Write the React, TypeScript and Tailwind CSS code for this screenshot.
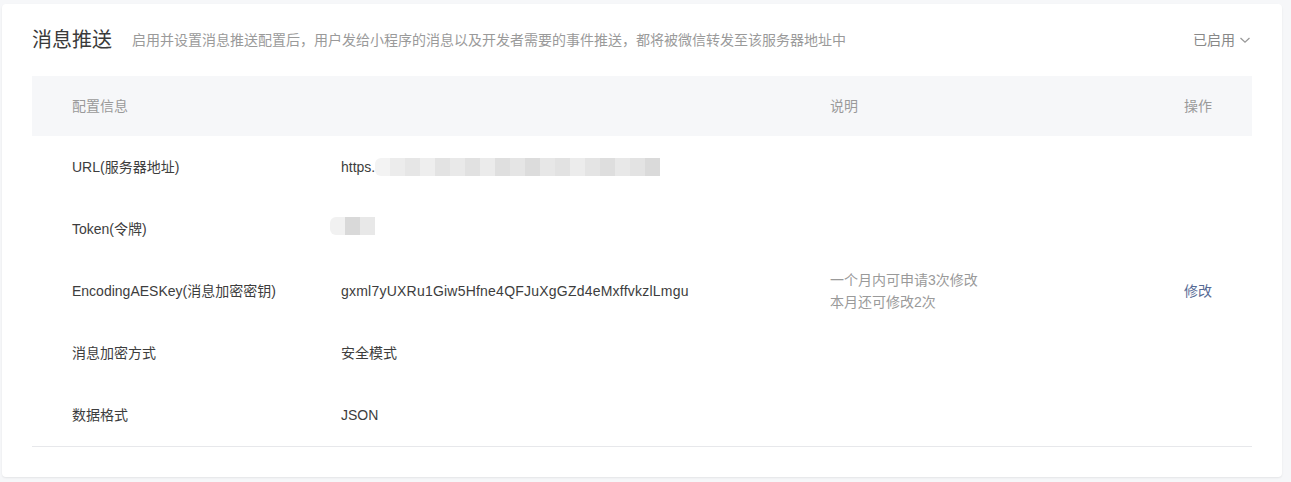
import React from "react";

const font = {
  fontFamily: '"Liberation Sans", "Noto Sans CJK SC", sans-serif',
};

function Blur({ shades, w = 15 }: { shades: string[]; w?: number }) {
  return (
    <span className="inline-flex h-[18px] items-stretch blur-[0.6px] rounded-l-[6px] overflow-hidden align-middle">
      {shades.map((c, i) => (
        <span key={i} style={{ background: c, width: w }} />
      ))}
    </span>
  );
}

const urlShades = [
  "#f3f3f3",
  "#ececec",
  "#e6e6e6",
  "#eeeeee",
  "#e3e3e3",
  "#e9e9e9",
  "#e1e1e1",
  "#ebebeb",
  "#dfdfdf",
  "#e5e5e5",
  "#dcdcdc",
  "#e7e7e7",
  "#e2e2e2",
  "#ececec",
  "#e4e4e4",
  "#dedede",
  "#e8e8e8",
  "#e3e3e3",
  "#dadada",
];

export default function App() {
  const rows: { label: string; value: React.ReactNode; desc?: React.ReactNode; op?: string }[] = [
    {
      label: "URL(服务器地址)",
      value: (
        <span className="inline-flex items-center">
          <span>https.</span>
          <Blur shades={urlShades} />
        </span>
      ),
    },
    {
      label: "Token(令牌)",
      value: (
        <span className="inline-flex items-center -ml-[11px]">
          <Blur shades={["#f1f1f1", "#d9d9d9", "#e8e8e8"]} w={15} />
        </span>
      ),
    },
    {
      label: "EncodingAESKey(消息加密密钥)",
      value: <span className="tracking-[0.22px]">gxml7yUXRu1Giw5Hfne4QFJuXgGZd4eMxffvkzlLmgu</span>,
      desc: (
        <div className="leading-[22px] text-[#9a9a9a]">
          <div>一个月内可申请3次修改</div>
          <div>本月还可修改2次</div>
        </div>
      ),
      op: "修改",
    },
    { label: "消息加密方式", value: "安全模式" },
    { label: "数据格式", value: "JSON" },
  ];

  return (
    <div className="min-h-[482px] w-[1291px] bg-[#f6f7f9] pt-[4px] pl-[2px]" style={font}>
      <div className="w-[1280px] h-[473px] bg-white rounded-[4px] shadow-[0_1px_2px_rgba(0,0,0,0.08)] pl-[30px] pr-[30px]">
        <div className="flex items-center h-[72px]">
          <span className="text-[20px] text-[#3a3a3a]">消息推送</span>
          <span className="ml-[20px] text-[14px] text-[#9a9a9a]">
            启用并设置消息推送配置后，用户发给小程序的消息以及开发者需要的事件推送，都将被微信转发至该服务器地址中
          </span>
          <span className="ml-auto flex items-center text-[14px] text-[#888888]">
            已启用
            <svg width="14" height="12" viewBox="0 0 14 12" className="ml-[3px]">
              <path d="M2.5 4 L7 8.2 L11.5 4" fill="none" stroke="#999" strokeWidth="1.3" />
            </svg>
          </span>
        </div>
        <div className="w-[1220px] text-[14px]">
          <div className="grid grid-cols-[309px_489px_354px_68px] h-[60px] items-center bg-[#f6f7f9] text-[#9a9a9a]">
            <div className="pl-[40px]">配置信息</div>
            <div></div>
            <div>说明</div>
            <div>操作</div>
          </div>
          <div className="border-b border-[#e7e8eb]">
            {rows.map((r) => (
              <div
                key={r.label}
                className="grid grid-cols-[309px_489px_354px_68px] h-[62px] items-center text-[#3d3d3d]"
              >
                <div className="pl-[40px]">{r.label}</div>
                <div>{r.value}</div>
                <div>{r.desc}</div>
                <div className="text-[#576b95]">{r.op}</div>
              </div>
            ))}
          </div>
        </div>
      </div>
    </div>
  );
}
